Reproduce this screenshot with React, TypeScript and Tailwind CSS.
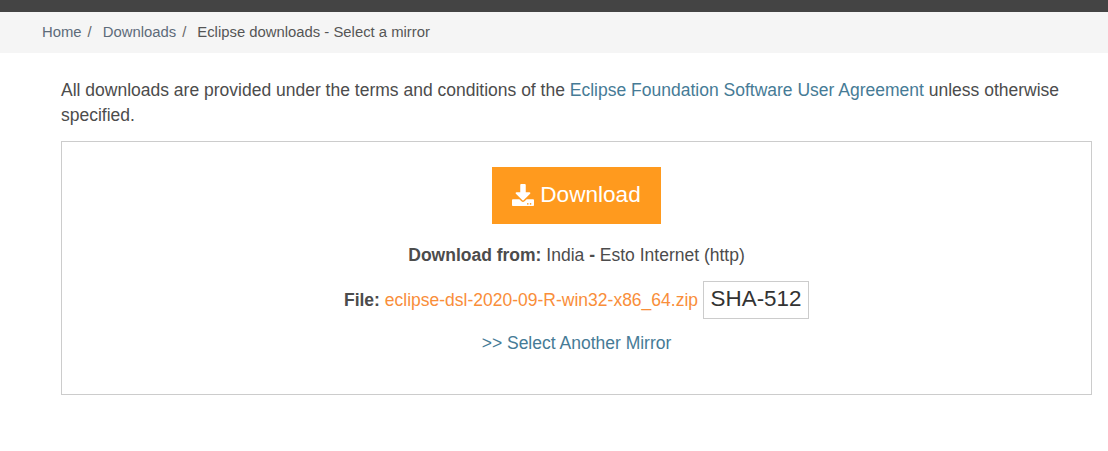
import { FaDownload } from "react-icons/fa";

export default function App() {
  return (
    <div className="min-h-[451px] bg-white font-['Liberation_Sans',Arial,sans-serif] text-[#4c4c4c]">
      <div className="h-3 bg-[#444444]" />
      <nav className="flex h-[41px] items-center bg-[#f5f5f5] pl-[42px] text-[14.85px] text-[#555]">
        <a className="text-[#5d6b7a]">Home</a>
        <span className="ml-[6px] mr-[11px] text-[#666]">/</span>
        <a className="text-[#5d6b7a]">Downloads</a>
        <span className="ml-[6px] mr-[11px] text-[#666]">/</span>
        <span>Eclipse downloads - Select a mirror</span>
      </nav>
      <main className="pl-[61px] pr-4 pt-[25px]">
        <p className="text-[17.5px] leading-[25px]">
          All downloads are provided under the terms and conditions of the{" "}
          <a className="text-[#467b96]">Eclipse Foundation Software User Agreement</a>{" "}
          unless otherwise specified.
        </p>
        <div className="mt-[13px] flex h-[254px] flex-col items-center border border-[#cccccc] pt-[25px] text-[17.5px]">
          <a className="flex h-[57px] w-[169px] items-center justify-center gap-[6px] bg-[#ff9a1e] pb-[2px] text-[22.6px] text-white">
            <FaDownload className="text-[22px]" />
            Download
          </a>
          <p className="mt-[20px] leading-[23px]">
            <b>Download from:</b> India <b>-</b> Esto Internet (http)
          </p>
          <div className="mt-[14px] flex items-center">
            <p>
              <b>File:</b> <a className="text-[#f98e3a]">eclipse-dsl-2020-09-R-win32-x86_64.zip</a>
            </p>
            <span className="ml-[5px] flex h-[38px] w-[106px] items-center justify-center border border-[#cccccc] pb-[2px] text-[22.4px] text-[#333]">
              SHA-512
            </span>
          </div>
          <a className="mt-[13px] leading-[23px] text-[#467b96]">&gt;&gt; Select Another Mirror</a>
        </div>
      </main>
    </div>
  );
}
